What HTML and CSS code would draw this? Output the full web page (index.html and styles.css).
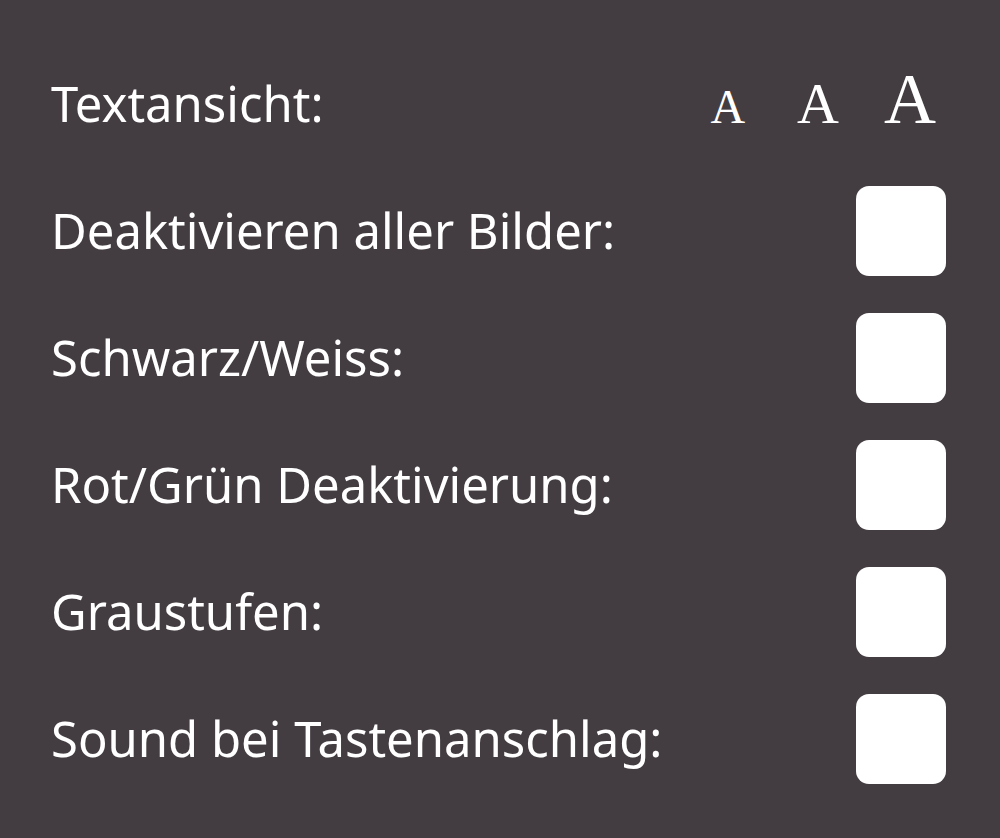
FILE: index.html
```html
<!DOCTYPE html>
<html lang="de">
<head>
<meta charset="utf-8">
<title>Barrierefreiheit</title>
<link rel="stylesheet" href="styles.css">
</head>
<body>
<div class="panel">
  <div class="row">
    <span class="label">Textansicht:</span>
    <div class="sizes">
      <span class="a a-s">A</span>
      <span class="a a-m">A</span>
      <span class="a a-l">A</span>
    </div>
  </div>
  <div class="row">
    <span class="label">Deaktivieren aller Bilder:</span>
    <span class="box"></span>
  </div>
  <div class="row">
    <span class="label">Schwarz/Weiss:</span>
    <span class="box"></span>
  </div>
  <div class="row">
    <span class="label">Rot/Grün Deaktivierung:</span>
    <span class="box"></span>
  </div>
  <div class="row">
    <span class="label">Graustufen:</span>
    <span class="box"></span>
  </div>
  <div class="row">
    <span class="label">Sound bei Tastenanschlag:</span>
    <span class="box"></span>
  </div>
</div>
</body>
</html>
```

FILE: styles.css
```css
html, body {
  margin: 0;
  padding: 0;
  background: #433d41;
}
.panel {
  width: 1000px;
  height: 838px;
  box-sizing: border-box;
  padding: 40px 54px 0 51px;
  display: flex;
  flex-direction: column;
}
.row {
  height: 127px;
  display: flex;
  align-items: center;
  justify-content: space-between;
}
.label {
  color: #ffffff;
  font-family: "Noto Sans", "Open Sans", sans-serif;
  font-size: 49px;
  letter-spacing: 0;
  line-height: 1;
}
.sizes {
  display: flex;
  align-items: baseline;
  margin-right: 10px;
  margin-top: -10px;
}
.a {
  color: #ffffff;
  font-family: "Liberation Serif", "Times New Roman", serif;
  line-height: 1;
  font-weight: 400;
}
.a-s { font-size: 48px; }
.a-m { font-size: 58px; margin-left: 52px; }
.a-l { font-size: 72px; margin-left: 45px; }
.box {
  width: 90px;
  height: 90px;
  border-radius: 13px;
  background: #ffffff;
}
```
